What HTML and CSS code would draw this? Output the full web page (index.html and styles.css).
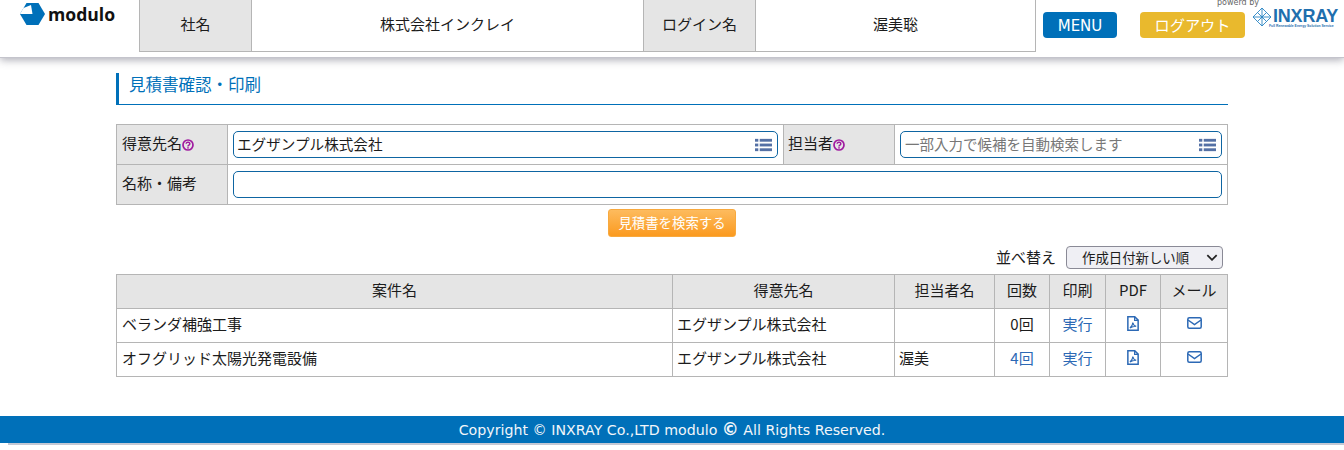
FILE: index.html
```html
<!DOCTYPE html>
<html lang="ja">
<head>
<meta charset="utf-8">
<title>見積書確認・印刷</title>
<link rel="stylesheet" href="styles.css">
</head>
<body>
<svg class="defs" width="0" height="0" aria-hidden="true">
  <defs>
    <symbol id="list" viewBox="0 0 18 14">
      <rect x="0" y="0.5" width="3.5" height="3"/><rect x="5" y="0.5" width="13" height="3"/>
      <rect x="0" y="5.5" width="3.5" height="3"/><rect x="5" y="5.5" width="13" height="3"/>
      <rect x="0" y="10.5" width="3.5" height="3"/><rect x="5" y="10.5" width="13" height="3"/>
    </symbol>
    <symbol id="help" viewBox="0 0 12 12">
      <circle cx="6" cy="6" r="5" fill="none" stroke="#a01ba0" stroke-width="1.7"/>
      <path d="M4.200 4.800a1.800 1.600 0 1 1 2.700 1.400c-.6.350-.9.600-.9 1.200" fill="none" stroke="#a01ba0" stroke-width="1.500"/>
      <rect x="5.200" y="8.200" width="1.600" height="1.400" fill="#a01ba0"/>
    </symbol>
    <symbol id="pdf" viewBox="0 0 11 14">
      <path d="M.7.7h6.400l3.200 3.200v9.400H.7z" fill="none" stroke="#2c69b5" stroke-width="1.400"/>
      <path d="M7 .7v3.400h3.300" fill="none" stroke="#2c69b5" stroke-width="1.100"/>
      <path d="M2.600 11.200c1.500-1 2.600-3 2.700-5 .4 2 1.300 3 3.200 3.400-2 0-4.200.5-5.900 1.600z" fill="none" stroke="#2c69b5" stroke-width="1"/>
    </symbol>
    <symbol id="mail" viewBox="0 0 15 12">
      <rect x=".8" y=".8" width="13.400" height="10.400" rx="1.500" fill="none" stroke="#2c69b5" stroke-width="1.500"/>
      <path d="M1 3l6.500 4.500L14 3" fill="none" stroke="#2c69b5" stroke-width="1.500"/>
    </symbol>
  </defs>
</svg>

<header class="topbar">
  <div class="brand">
    <svg class="brand-mark" viewBox="0 0 25 22" aria-hidden="true">
      <path d="M6.500 0H18.500L25 11 18.500 22H6.500L0 11z" fill="#0070b9"/>
      <path d="M0 11 3.500 5 11 2 12.500 11z" fill="#fff"/>
    </svg>
    <span class="brand-name">modulo</span>
  </div>
  <table class="account">
    <tr>
      <th class="acc-label">社名</th>
      <td class="acc-company">株式会社インクレイ</td>
      <th class="acc-label">ログイン名</th>
      <td class="acc-user">渥美聡</td>
    </tr>
  </table>
  <a class="top-btn menu-btn">MENU</a>
  <a class="top-btn logout-btn">ログアウト</a>
  <div class="powered">
    <span class="powered-by">powerd by</span>
    <div class="inxray">
      <svg class="inxray-mark" viewBox="0 0 20 20" aria-hidden="true">
        <path d="M10 1l9 9-9 9-9-9zM5.500 5.500l9 9M14.500 5.500l-9 9M10 1v18M1 10h18" fill="none" stroke="#2a86c4" stroke-width=".9"/>
      </svg>
      <div class="inxray-text">
        <span class="inxray-name">INXRAY</span>
        <span class="inxray-sub">Full Renewable Energy Solution Service</span>
      </div>
    </div>
  </div>
</header>

<main class="content">
  <h1 class="page-title">見積書確認・印刷</h1>

  <table class="grid search">
    <tr>
      <th class="search-label">得意先名<svg class="help"><use href="#help"/></svg></th>
      <td class="search-main">
        <div class="field"><span class="field-text">エグザンプル株式会社</span><svg class="list-icon"><use href="#list"/></svg></div>
      </td>
      <th class="search-label">担当者<svg class="help"><use href="#help"/></svg></th>
      <td>
        <div class="field"><span class="field-text placeholder">一部入力で候補を自動検索します</span><svg class="list-icon"><use href="#list"/></svg></div>
      </td>
    </tr>
    <tr>
      <th class="search-label">名称・備考</th>
      <td colspan="3"><div class="field"></div></td>
    </tr>
  </table>

  <div class="search-action"><button class="search-btn" type="button">見積書を検索する</button></div>

  <div class="sort-row">
    <span class="sort-label">並べ替え</span>
    <div class="sort-select"><span>作成日付新しい順</span>
      <svg class="chevron" viewBox="0 0 10 6" aria-hidden="true"><path d="M1 1l4 4 4-4" fill="none" stroke="#222" stroke-width="1.500"/></svg>
    </div>
  </div>

  <table class="grid results">
    <colgroup>
      <col class="c-name"><col class="c-client"><col class="c-staff"><col class="c-count"><col class="c-print"><col class="c-pdf"><col class="c-mail">
    </colgroup>
    <tr>
      <th>案件名</th><th>得意先名</th><th>担当者名</th><th>回数</th><th>印刷</th><th>PDF</th><th>メール</th>
    </tr>
    <tr>
      <td>ベランダ補強工事</td><td>エグザンプル株式会社</td><td></td>
      <td class="center">0回</td><td class="center link">実行</td>
      <td class="center icon-cell"><svg class="pdf-icon"><use href="#pdf"/></svg></td>
      <td class="center icon-cell"><svg class="mail-icon"><use href="#mail"/></svg></td>
    </tr>
    <tr>
      <td>オフグリッド太陽光発電設備</td><td>エグザンプル株式会社</td><td>渥美</td>
      <td class="center link">4回</td><td class="center link">実行</td>
      <td class="center icon-cell"><svg class="pdf-icon"><use href="#pdf"/></svg></td>
      <td class="center icon-cell"><svg class="mail-icon"><use href="#mail"/></svg></td>
    </tr>
  </table>
</main>

<footer class="footer">Copyright © INXRAY Co.,LTD modulo <b class="copy-bold">©</b> All Rights Reserved.</footer>
</body>
</html>
```

FILE: styles.css
```css
* { box-sizing: border-box; }
html, body { margin: 0; padding: 0; }
body {
  height: 450px;
  overflow: hidden;
  background: #fff;
  color: #1c1c1c;
  font-family: "Noto Sans CJK JP", "Noto Sans", sans-serif;
  font-size: 15px;
}
.defs { position: absolute; }

.topbar {
  display: flex;
  align-items: flex-start;
  height: 58px;
  background: #fff;
  box-shadow: 0 2px 8px rgba(70, 70, 90, .45);
  border-bottom: 1px solid #c4c4cc;
}
.brand {
  display: flex;
  align-items: center;
  gap: 3px;
  width: 139px;
  padding: 3px 0 0 20px;
}
.brand-mark { width: 25px; height: 22px; flex: none; }
.brand-name {
  font-family: "Open Sans", sans-serif;
  font-weight: 700;
  font-size: 17.600px;
  line-height: 22px;
  margin-top: -1px;
  color: #111;
}
.account {
  width: 897px;
  height: 52px;
  table-layout: fixed;
  border-collapse: collapse;
  border: 1px solid #b5b5b5;
  border-top: 0;
}
.account th, .account td {
  border: 1px solid #b5b5b5;
  border-top: 0;
  text-align: center;
  font-size: 15px;
  font-weight: 400;
  padding: 0 0 4px;
}
.acc-label { width: 112px; background: #e5e5e5; }
.acc-company { width: 392px; }
.top-btn {
  display: block;
  height: 26px;
  margin-top: 12px;
  border-radius: 4px;
  color: #fff;
  text-align: center;
  font-family: "DejaVu Sans", "Noto Sans CJK JP", sans-serif;
  font-size: 15px;
  line-height: 28px;
}
.menu-btn { width: 74px; margin-left: 7px; background: #0070b9; }
.logout-btn {
  width: 105px;
  margin-left: 23px;
  background: #e9b92d;
  font-family: "Noto Sans CJK JP", sans-serif;
  font-size: 15.200px;
  line-height: 25px;
}
.powered { margin-left: 7px; width: 85px; }
.powered-by {
  display: block;
  height: 7px;
  margin-left: -35px;
  font-family: "DejaVu Sans", sans-serif;
  font-size: 8px;
  line-height: 6px;
  color: #666;
}
.inxray { display: flex; gap: 1px; }
.inxray-mark { width: 20px; height: 20px; flex: none; }
.inxray-text { display: flex; flex-direction: column; padding-top: 2px; min-width: 0; }
.inxray-name {
  font-family: "Liberation Sans", sans-serif;
  font-weight: 700;
  font-size: 18px;
  line-height: 15px;
  color: #1f6fae;
  letter-spacing: -.2px;
}
.inxray-sub {
  margin-left: -4px;
  font-family: "Liberation Sans", sans-serif;
  font-size: 3.400px;
  line-height: 5px;
  white-space: nowrap;
  color: #1f6fae;
  font-weight: 700;
}

.content { width: 1112px; margin: 15px 0 0 116px; }
.page-title {
  margin: 0;
  height: 32px;
  padding-left: 10px;
  border-left: 3px solid #0070b9;
  border-bottom: 1px solid #0070b9;
  color: #0070b9;
  font-size: 16.500px;
  font-weight: 400;
  line-height: 23px;
}

.grid {
  width: 100%;
  table-layout: fixed;
  border-collapse: collapse;
}
.grid th, .grid td {
  border: 1px solid #b5b5b5;
  padding: 0 5px 4px;
  font-size: 15px;
  font-weight: 400;
}
.grid th { background: #e5e5e5; }
.search { margin-top: 19px; }
.search tr { height: 40px; }
.search .search-label { width: 111px; text-align: left; white-space: nowrap; }
.search .search-main { width: 556px; }
.search th + td + th { width: 111px; padding-left: 4px; }
.search td { padding-bottom: 0; }
.help { width: 12px; height: 12px; vertical-align: -2px; }
.field {
  display: flex;
  align-items: center;
  justify-content: space-between;
  height: 27px;
  padding: 0 5px 0 3px;
  border: 1px solid #0e65a2;
  border-radius: 5px;
  background: #fff;
  font-size: 14.600px;
}
.field-text { line-height: 24px; margin-top: -1px; }
.placeholder { color: #777; font-size: 14.500px; margin-left: 1px; }
.list-icon { width: 17px; height: 14px; fill: #5470a5; }

.search-action { display: flex; justify-content: center; margin-top: 4px; }
.search-btn {
  width: 128px;
  height: 28px;
  padding: 0 0 3px;
  border: 1px solid #f8a93e;
  border-radius: 3px;
  background: linear-gradient(#fdbb5e, #fb9a1f);
  color: #fff;
  font-family: inherit;
  font-size: 13.400px;
}

.sort-row {
  display: flex;
  justify-content: flex-end;
  align-items: center;
  gap: 10px;
  height: 24px;
  margin-top: 9px;
  padding-right: 5px;
}
.sort-label { font-size: 15px; line-height: 20px; margin-top: -3px; }
.sort-select {
  display: flex;
  align-items: center;
  justify-content: space-between;
  width: 157px;
  height: 23px;
  padding: 0 4px 1px 15px;
  border: 1px solid #8a8a96;
  border-radius: 4px;
  background: #efeff4;
  font-size: 13.400px;
  margin-top: -1px;
}
.chevron { width: 12px; height: 7px; }

.results { width: 1111px; margin-top: 4px; }
.results tr { height: 34px; }
.results th { text-align: center; }
.grid.results td + td { padding-left: 4px; }
.grid.results .center { padding-left: 0; padding-right: 0; }
.c-name { width: 556px; }
.c-client { width: 222px; }
.c-staff { width: 100px; }
.c-count { width: 55px; }
.c-print { width: 56px; }
.c-pdf { width: 55px; }
.c-mail { width: 67px; }
.center { text-align: center; }
.grid .link { color: #2c69b5; }
.grid .icon-cell { padding-bottom: 0; }
.pdf-icon { width: 12px; height: 15px; vertical-align: 1px; }
.mail-icon { width: 15px; height: 12px; vertical-align: 3px; }

.footer {
  position: absolute;
  left: 0;
  right: 0;
  top: 416px;
  height: 27px;
  background: #0070b9;
  color: #f2f6fa;
  text-align: center;
  font-family: "DejaVu Sans", sans-serif;
  font-size: 14.200px;
  line-height: 28px;
}
.footer::after {
  content: "";
  display: block;
  height: 2px;
  margin-top: -1px;
  margin-left: 8px;
  background: #c4c8d4;
}
.copy-bold { font-weight: 700; font-size: 17px; line-height: 14px; }
```
